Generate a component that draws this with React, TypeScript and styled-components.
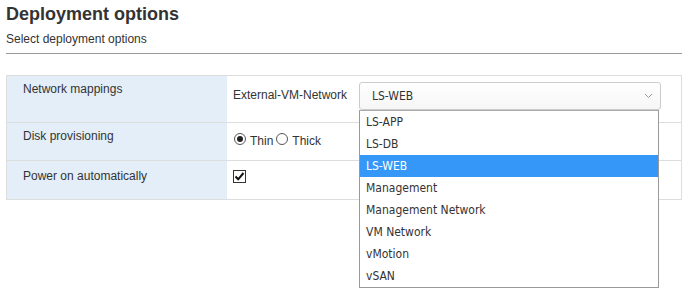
import * as React from 'react';
import styled, { createGlobalStyle } from 'styled-components';

const GlobalStyle = createGlobalStyle`
  html, body {
    margin: 0;
    padding: 0;
    background: #fff;
  }
  body {
    font-family: "Liberation Sans", Arial, sans-serif;
    color: #333;
  }
`;

const Page = styled.div`
  box-sizing: border-box;
  padding: 3px 3px 0 6px;
  width: 685px;
  min-height: 291px;
`;

const Title = styled.h2`
  margin: 0;
  font-size: 18px;
  font-weight: 700;
  line-height: 23px;
  color: #333;
`;

const Subtitle = styled.div`
  margin-top: 6px;
  font-size: 12px;
  line-height: 14px;
  padding-bottom: 7px;
  border-bottom: 1px solid #999;
`;

const Table = styled.div`
  margin-top: 21px;
  border: 1px solid #ddd;
  border-bottom: none;
`;

const Row = styled.div<{ $height: number }>`
  display: grid;
  grid-template-columns: 220px 1fr;
  height: ${(p) => p.$height}px;
  border-bottom: 1px solid #ddd;
`;

const Label = styled.div<{ $top: number }>`
  background: #e3eef8;
  font-size: 12px;
  line-height: 14px;
  padding: ${(p) => p.$top}px 0 0 16px;
`;

const Cell = styled.div<{ $top: number }>`
  position: relative;
  display: flex;
  align-items: flex-start;
  padding: ${(p) => p.$top}px 0 0 6px;
  font-size: 12px;
  line-height: 14px;
`;

const MapName = styled.span`
  width: 126px;
  padding-top: 6px;
`;

const SelectWrap = styled.div`
  position: relative;
  width: 302px;
`;

const SelectBox = styled.div`
  box-sizing: border-box;
  height: 28px;
  border: 1px solid #ccc;
  border-radius: 3px;
  background: linear-gradient(#fff, #f6f6f6);
  display: flex;
  align-items: center;
  justify-content: space-between;
  padding: 0 7px 0 12px;
  font-family: "DejaVu Sans Condensed", "DejaVu Sans", sans-serif;
  font-size: 12px;
  color: #333;
`;

const List = styled.ul`
  position: absolute;
  top: 28px;
  left: 0;
  width: 300px;
  box-sizing: border-box;
  margin: 0;
  padding: 0;
  list-style: none;
  background: #fff;
  border: 1px solid #999;
  border-top-color: #aaa;
  z-index: 2;
`;

const Option = styled.li<{ $active?: boolean }>`
  height: 22px;
  line-height: 22px;
  padding-left: 6px;
  font-family: "DejaVu Sans Condensed", "DejaVu Sans", sans-serif;
  font-size: 12px;
  color: ${(p) => (p.$active ? '#fff' : '#333')};
  background: ${(p) => (p.$active ? '#3597f7' : 'transparent')};
`;

const Choice = styled.label`
  display: inline-flex;
  align-items: flex-start;
  margin-right: 2px;
`;

const Radio = styled.span<{ $on?: boolean }>`
  box-sizing: border-box;
  width: 12px;
  height: 12px;
  border: 1px solid #555;
  border-radius: 50%;
  margin: -1px 4px 0 1px;
  display: inline-flex;
  align-items: center;
  justify-content: center;
  background: #fff;
  &::after {
    content: '';
    display: ${(p) => (p.$on ? 'block' : 'none')};
    width: 6px;
    height: 6px;
    border-radius: 50%;
    background: #222;
  }
`;

const Check = styled.span`
  box-sizing: border-box;
  width: 13px;
  height: 13px;
  border: 1px solid #333;
  background: #fff;
  display: inline-flex;
  align-items: center;
  justify-content: center;
`;

const networks = [
  'LS-APP',
  'LS-DB',
  'LS-WEB',
  'Management',
  'Management Network',
  'VM Network',
  'vMotion',
  'vSAN',
];

export default function App() {
  return (
    <Page>
      <GlobalStyle />
      <Title>Deployment options</Title>
      <Subtitle>Select deployment options</Subtitle>
      <Table>
        <Row $height={46}>
          <Label $top={6}>Network mappings</Label>
          <Cell $top={6}>
            <MapName>External-VM-Network</MapName>
            <SelectWrap>
              <SelectBox>
                <span>LS-WEB</span>
                <svg width="9" height="6" viewBox="0 0 9 6">
                  <path d="M1 1 L4.5 4.5 L8 1" fill="none" stroke="#999" strokeWidth="1" />
                </svg>
              </SelectBox>
              <List>
                {networks.map((n) => (
                  <Option key={n} $active={n === 'LS-WEB'}>
                    {n}
                  </Option>
                ))}
              </List>
            </SelectWrap>
          </Cell>
        </Row>
        <Row $height={37}>
          <Label $top={6}>Disk provisioning</Label>
          <Cell $top={11}>
            <Choice>
              <Radio $on />
              Thin
            </Choice>
            <Choice>
              <Radio />
              Thick
            </Choice>
          </Cell>
        </Row>
        <Row $height={38}>
          <Label $top={8}>Power on automatically</Label>
          <Cell $top={9}>
            <Check>
              <svg width="11" height="11" viewBox="0 0 11 11">
                <path d="M1.5 5.5 L4.2 8.3 L9.5 2" fill="none" stroke="#111" strokeWidth="2" />
              </svg>
            </Check>
          </Cell>
        </Row>
      </Table>
    </Page>
  );
}
